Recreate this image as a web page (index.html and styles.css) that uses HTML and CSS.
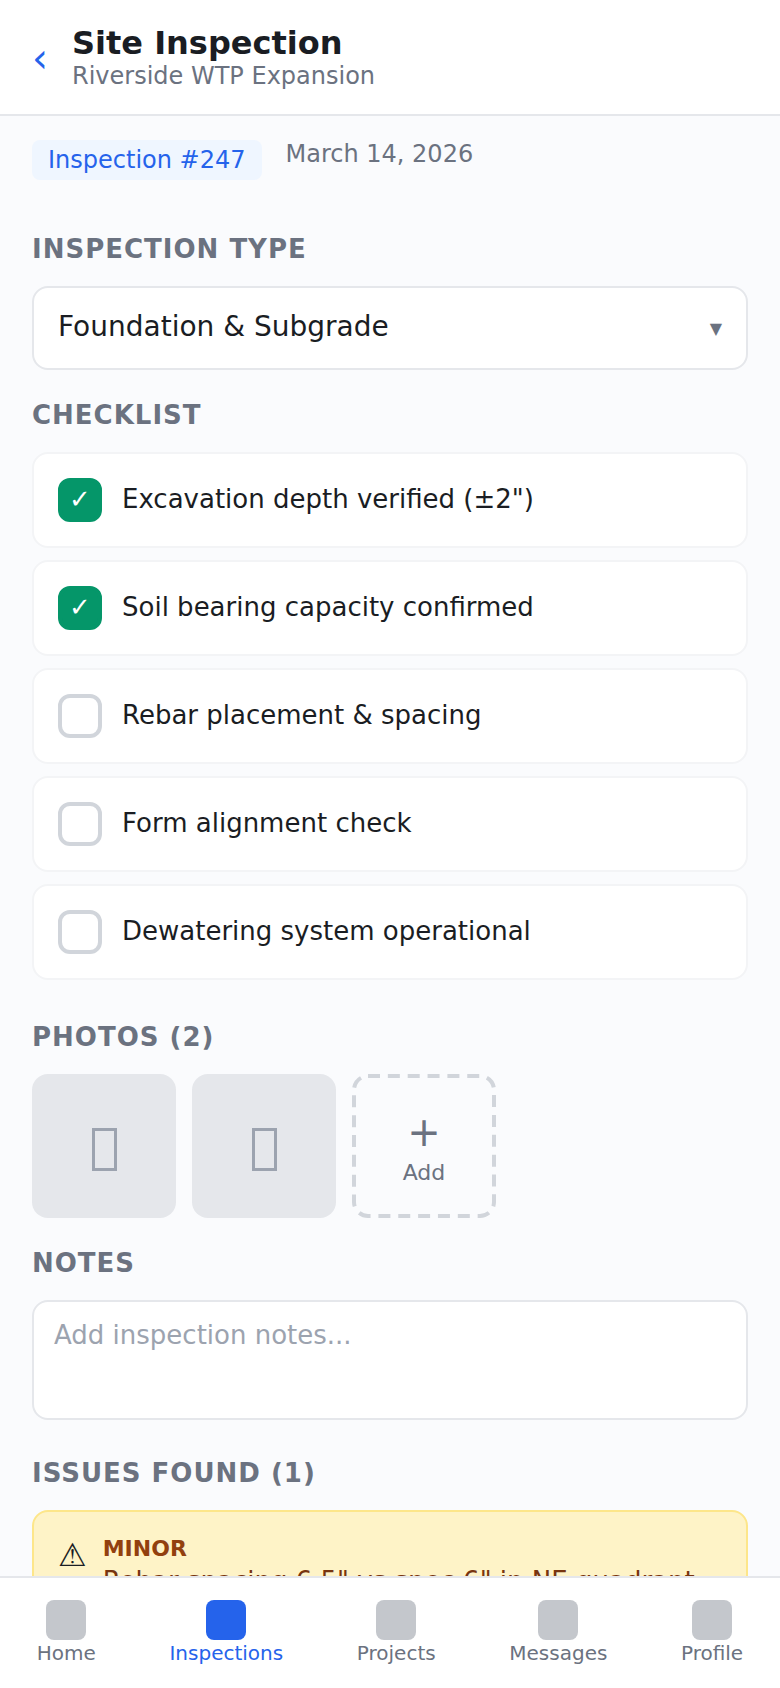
FILE: index.html
```
<!DOCTYPE html>
<html lang="en">
<head>
    <meta charset="UTF-8">
    <meta name="viewport" content="width=device-width, initial-scale=1.0">
    <title>Site Inspection</title>
    <link rel="stylesheet" href="styles.css">
</head>
<body>
    <header class="header">
        <a href="#" class="back-link">‹</a>
        <div class="header-text">
            <h1>Site Inspection</h1>
            <p>Riverside WTP Expansion</p>
        </div>
    </header>

    <main class="content">
        <div class="meta">
            <span class="badge">Inspection #247</span>
            <span class="date">March 14, 2026</span>
        </div>

        <h2 class="type-title">Inspection Type</h2>
        <div class="select">
            <span>Foundation &amp; Subgrade</span>
            <span class="arrow">▼</span>
        </div>

        <h2>Checklist</h2>
        <ul class="checklist">
            <li><span class="checkbox checked">✓</span><span class="item-text">Excavation depth verified (±2")</span></li>
            <li><span class="checkbox checked">✓</span><span class="item-text">Soil bearing capacity confirmed</span></li>
            <li><span class="checkbox"></span><span class="item-text">Rebar placement &amp; spacing</span></li>
            <li><span class="checkbox"></span><span class="item-text">Form alignment check</span></li>
            <li><span class="checkbox"></span><span class="item-text">Dewatering system operational</span></li>
        </ul>

        <h2 class="photos-title">Photos (2)</h2>
        <div class="photos">
            <div class="photo"><span class="photo-icon"></span></div>
            <div class="photo"><span class="photo-icon"></span></div>
            <div class="photo add-photo">
                <svg class="add-outline" viewBox="0 0 144 144">
                    <rect x="2" y="2" width="140" height="140" rx="14" />
                </svg>
                <span class="plus">+</span>
                <span>Add</span>
            </div>
        </div>

        <h2>Notes</h2>
        <textarea class="notes" placeholder="Add inspection notes..."></textarea>

        <h2 class="issues-title">Issues Found (1)</h2>
        <div class="issue">
            <span class="issue-icon">⚠</span>
            <div>
                <div class="severity">MINOR</div>
                <div class="issue-text">Rebar spacing 6.5" vs spec 6" in NE quadrant</div>
            </div>
        </div>
    </main>

    <nav class="bottom-nav">
        <a href="#"><span class="nav-icon"></span>Home</a>
        <a href="#" class="active"><span class="nav-icon"></span>Inspections</a>
        <a href="#"><span class="nav-icon"></span>Projects</a>
        <a href="#"><span class="nav-icon"></span>Messages</a>
        <a href="#"><span class="nav-icon"></span>Profile</a>
    </nav>
</body>
</html>
```
FILE: styles.css
```
* {
    box-sizing: border-box;
    margin: 0;
    padding: 0;
}
body {
    display: flex;
    flex-direction: column;
    height: 100vh;
    overflow: hidden;
    background-color: #fafbfd;
    color: #1a1d23;
    font-family: "DejaVu Sans", sans-serif;
    font-size: 26px;
}
a {
    text-decoration: none;
}
.header {
    display: flex;
    align-items: center;
    gap: 24px;
    flex-shrink: 0;
    height: 116px;
    padding: 0 32px;
    background-color: #fff;
    border-bottom: 2px solid #e5e7eb;
}
.back-link {
    padding-top: 2px;
    color: #2563eb;
    font-size: 40px;
}
.header h1 {
    font-size: 32px;
    line-height: 37px;
}
.header p {
    color: #6b7280;
    font-size: 24px;
    line-height: 28px;
}
.content {
    flex: 1;
    min-height: 0;
    overflow: hidden;
    padding: 24px 32px;
}
.meta {
    display: flex;
    align-items: flex-start;
    gap: 24px;
    font-size: 24px;
    line-height: 28px;
}
.badge {
    padding: 6px 16px;
    border-radius: 8px;
    background-color: #eff6ff;
    color: #2563eb;
}
.date {
    color: #6b7280;
}
h2 {
    margin: 30px 0 22px;
    color: #6b7280;
    font-size: 26px;
    line-height: 30px;
    letter-spacing: 1px;
    text-transform: uppercase;
}
.type-title {
    margin-top: 54px;
}
.photos-title {
    margin-top: 42px;
}
.issues-title {
    margin-top: 38px;
}
.select {
    display: flex;
    justify-content: space-between;
    height: 84px;
    padding: 22px 24px;
    border: 2px solid #e5e7eb;
    border-radius: 16px;
    background-color: #fff;
    font-size: 28px;
    line-height: 34px;
}
.arrow {
    color: #6b7280;
    font-size: 16px;
    line-height: 38px;
}
.checklist {
    display: flex;
    flex-direction: column;
    gap: 12px;
    list-style: none;
}
.checklist li {
    display: flex;
    align-items: center;
    gap: 20px;
    height: 96px;
    padding: 0 24px;
    border: 2px solid #f3f4f6;
    border-radius: 16px;
    background-color: #fff;
}
.item-text {
    padding-bottom: 2px;
}
.checkbox {
    display: flex;
    align-items: center;
    justify-content: center;
    width: 44px;
    height: 44px;
    padding-bottom: 2px;
    border: 4px solid #d1d5db;
    border-radius: 12px;
    font-size: 26px;
}
.checked {
    border-color: #059669;
    background-color: #059669;
    color: #fff;
}
.photos {
    display: flex;
    gap: 16px;
}
.photo {
    display: flex;
    align-items: center;
    justify-content: center;
    width: 144px;
    height: 144px;
    border-radius: 16px;
    background-color: #e5e7eb;
}
.photo-icon {
    width: 25px;
    height: 43px;
    margin-top: 7px;
    border: 3px solid #9ca3af;
}
.add-photo {
    position: relative;
    flex-direction: column;
    gap: 5px;
    padding-top: 2px;
    background: none;
    color: #6b7280;
    font-size: 22px;
}
/* dashed frame over the tile */
.add-outline {
    position: absolute;
    inset: 0;
    width: 144px;
    height: 144px;
    fill: none;
    stroke: #d1d5db;
    stroke-width: 4;
    stroke-dasharray: 12 7.85;
}
.plus {
    font-size: 40px;
}
.notes {
    display: block;
    width: 100%;
    height: 120px;
    padding: 18px 20px;
    border: 2px solid #e5e7eb;
    border-radius: 16px;
    background-color: #fff;
    font: inherit;
    resize: none;
}
.notes::placeholder {
    color: #9ca3af;
}
.issue {
    display: flex;
    gap: 16px;
    padding: 24px;
    border: 2px solid #fde68a;
    border-radius: 16px;
    background-color: #fef3c7;
}
.issue-icon {
    font-size: 32px;
}
.severity {
    color: #92400e;
    font-size: 22px;
    font-weight: bold;
    line-height: 26px;
}
.issue-text {
    margin-top: 4px;
    color: #78350f;
    font-size: 26px;
    line-height: 30px;
    white-space: nowrap;
}
.bottom-nav {
    display: flex;
    justify-content: space-around;
    flex-shrink: 0;
    height: 112px;
    padding-top: 22px;
    background-color: #fff;
    border-top: 2px solid #e5e7eb;
}
.bottom-nav a {
    display: flex;
    flex-direction: column;
    align-items: center;
    gap: 1px;
    color: #6b7280;
    font-size: 20px;
}
.nav-icon {
    width: 40px;
    height: 40px;
    border-radius: 8px;
    background-color: #c4c7cc;
}
.bottom-nav .active {
    color: #2563eb;
}
.active .nav-icon {
    background-color: #2563eb;
}
```
